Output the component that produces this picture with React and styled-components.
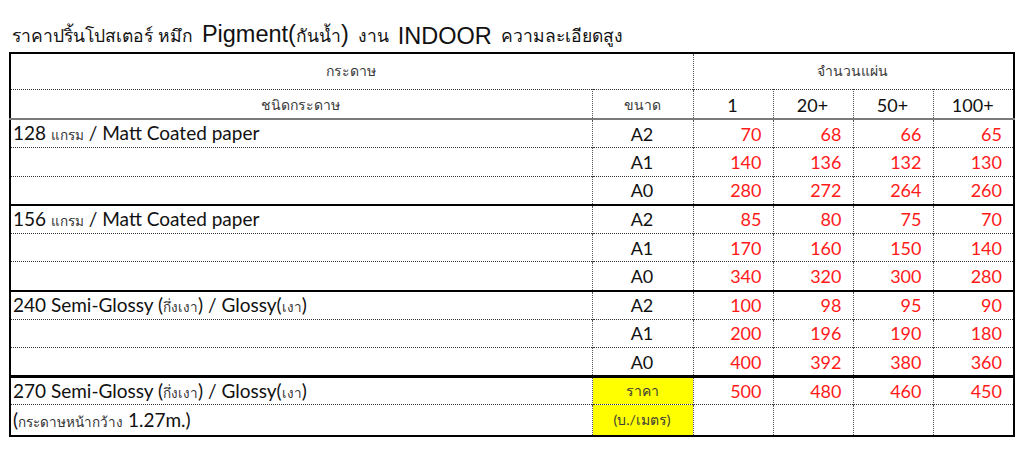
import React from 'react'
import styled, { createGlobalStyle } from 'styled-components'

const Global = createGlobalStyle`
  html, body {
    margin: 0;
    padding: 0;
    background: #fff;
  }
  body {
    font-family: "Lato", "Liberation Sans", sans-serif;
    color: #111;
  }
`

const Page = styled.div`
  width: 1024px;
  height: 449px;
  padding: 0 10px 0 9px;
  box-sizing: border-box;
  overflow: hidden;
`

const Title = styled.h1`
  height: 52px;
  margin: 0;
  padding: 0 0 2px 3px;
  box-sizing: border-box;
  display: flex;
  align-items: flex-end;
  gap: 9px;
  font-family: "Liberation Sans", Tahoma, sans-serif;
  font-weight: normal;
  font-size: 17.5px;
  line-height: 28px;
  color: #111;
  white-space: nowrap;
  .big {
    font-size: 23.5px;
  }
`

const Table = styled.table`
  width: 1004px;
  border-collapse: collapse;
  table-layout: fixed;
  border: 2px solid #000;
`

const Row = styled.tr`
  height: ${p => p.$h || 28.6}px;
  border-bottom: ${p => p.$line === 'group' ? '2px solid #000'
    : p.$line === 'thick' ? '3px solid #000'
    : p.$line === 'head' ? '2px solid #7a7a7a'
    : p.$line === 'none' ? '0'
    : '1px dotted #333'};
`

const Cell = styled.td`
  padding: ${p => p.$low ? '3px' : '0'} ${p => p.$align === 'right' ? '11px' : '3px'} 0 2px;
  text-align: ${p => p.$align || 'left'};
  vertical-align: middle;
  border-left: 1px dotted #555;
  font-size: ${p => p.$small ? '14px' : p.$label ? '19px' : '18px'};
  color: ${p => p.$red ? '#ff1a1a' : p.$small ? '#3a3a3a' : '#111'};
  background: ${p => p.$yellow ? '#ffff00' : 'transparent'};
  white-space: nowrap;
  overflow: hidden;
  &:first-child {
    border-left: 0;
  }
  .th {
    font-size: 13.5px;
    color: #333;
  }
`

const groups = [
  {
    name: <>128 <span className="th">แกรม</span> / Matt Coated paper</>,
    rows: [['A2', 70, 68, 66, 65], ['A1', 140, 136, 132, 130], ['A0', 280, 272, 264, 260]]
  },
  {
    name: <>156 <span className="th">แกรม</span> / Matt Coated paper</>,
    rows: [['A2', 85, 80, 75, 70], ['A1', 170, 160, 150, 140], ['A0', 340, 320, 300, 280]]
  },
  {
    name: <>240 Semi-Glossy (<span className="th">กึ่งเงา</span>) / Glossy(<span className="th">เงา</span>)</>,
    rows: [['A2', 100, 98, 95, 90], ['A1', 200, 196, 190, 180], ['A0', 400, 392, 380, 360]]
  }
]

export default function App () {
  return (
    <Page>
      <Global />
      <Title>
        <span>ราคาปริ้นโปสเตอร์ หมึก</span>
        <span><span className="big">Pigment(</span>กันน้ำ<span className="big">)</span></span>
        <span>งาน</span>
        <span className="big">INDOOR</span>
        <span>ความละเอียดสูง</span>
      </Title>
      <Table>
        <colgroup>
          <col style={{ width: 582 }} />
          <col style={{ width: 101 }} />
          <col style={{ width: 80 }} />
          <col style={{ width: 80 }} />
          <col style={{ width: 80 }} />
          <col style={{ width: 81 }} />
        </colgroup>
        <tbody>
          <Row $h={36}>
            <Cell colSpan={2} $align="center" $small>กระดาษ</Cell>
            <Cell colSpan={4} $align="center" $small>จำนวนแผ่น</Cell>
          </Row>
          <Row $h={30} $line="head">
            <Cell $align="center" $small $low>ชนิดกระดาษ</Cell>
            <Cell $align="center" $small $low>ขนาด</Cell>
            <Cell $align="center" $low>1</Cell>
            <Cell $align="center" $low>20+</Cell>
            <Cell $align="center" $low>50+</Cell>
            <Cell $align="center" $low>100+</Cell>
          </Row>
          {groups.map((g, gi) => g.rows.map((r, ri) => (
            <Row
              key={gi + '-' + ri}
              $line={ri < g.rows.length - 1 ? 'dot' : gi === groups.length - 1 ? 'thick' : 'group'}
            >
              <Cell $label>{ri === 0 ? g.name : ''}</Cell>
              <Cell $align="center">{r[0]}</Cell>
              {r.slice(1).map((v, i) => (
                <Cell key={i} $align="right" $red>{v}</Cell>
              ))}
            </Row>
          )))}
          <Row>
            <Cell $label>270 Semi-Glossy (<span className="th">กึ่งเงา</span>) / Glossy(<span className="th">เงา</span>)</Cell>
            <Cell $align="center" $small $yellow>ราคา</Cell>
            <Cell $align="right" $red>500</Cell>
            <Cell $align="right" $red>480</Cell>
            <Cell $align="right" $red>460</Cell>
            <Cell $align="right" $red>450</Cell>
          </Row>
          <Row $line="none" $h={31}>
            <Cell $label>(<span className="th">กระดาษหน้ากว้าง</span> 1.27m.)</Cell>
            <Cell $align="center" $small $yellow>(บ./เมตร)</Cell>
            <Cell />
            <Cell />
            <Cell />
            <Cell />
          </Row>
        </tbody>
      </Table>
    </Page>
  )
}
